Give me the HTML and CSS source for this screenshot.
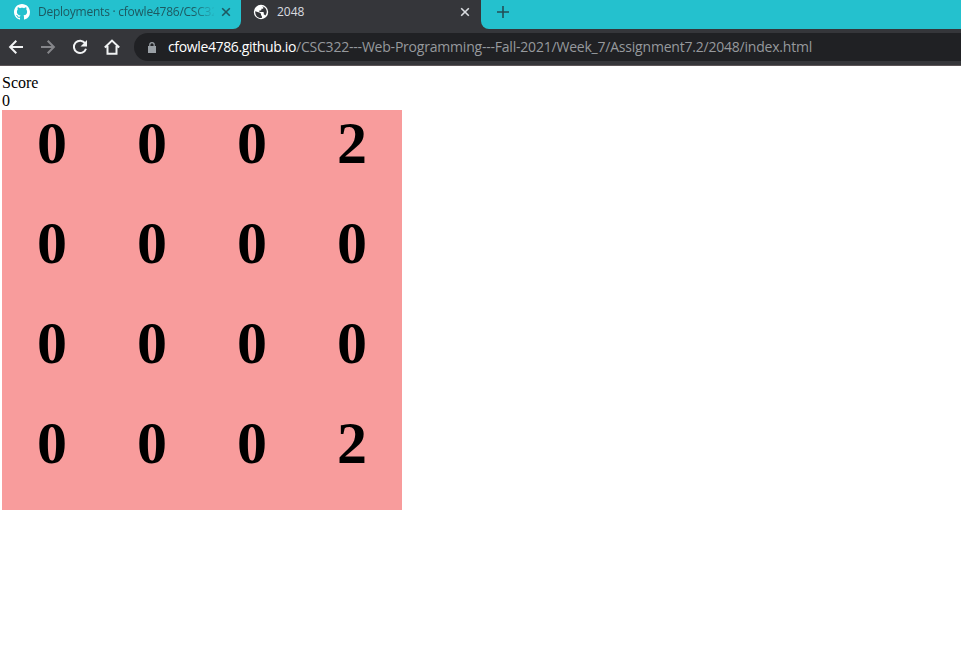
FILE: index.html
```html
<!DOCTYPE html>
<html lang="en">
<head>
<meta charset="utf-8">
<title>2048</title>
<link rel="stylesheet" href="styles.css">
</head>
<body>
<header class="browser">
  <div class="tabstrip">
    <div class="tab tab-inactive">
      <svg class="favicon" viewBox="0 0 16 16"><path fill="#fff" d="M8 0C3.58 0 0 3.58 0 8c0 3.54 2.29 6.53 5.47 7.59.4.07.55-.17.55-.38 0-.19-.01-.82-.01-1.49-2.01.37-2.53-.49-2.69-.94-.09-.23-.48-.94-.82-1.13-.28-.15-.68-.52-.01-.53.63-.01 1.08.58 1.23.82.72 1.21 1.87.87 2.33.66.07-.52.28-.87.51-1.07-1.78-.2-3.64-.89-3.64-3.95 0-.87.31-1.59.82-2.15-.08-.2-.36-1.02.08-2.12 0 0 .67-.21 2.2.82.64-.18 1.32-.27 2-.27s1.36.09 2 .27c1.53-1.04 2.2-.82 2.2-.82.44 1.1.16 1.92.08 2.12.51.56.82 1.27.82 2.15 0 3.07-1.87 3.75-3.65 3.95.29.25.54.73.54 1.48 0 1.07-.01 1.93-.01 2.2 0 .21.15.46.55.38A8.01 8.01 0 0 0 16 8c0-4.42-3.58-8-8-8z"/></svg>
      <span class="tab-title title-long">Deployments · cfowle4786/CSC32</span>
      <svg class="close" viewBox="0 0 10 10"><path d="M1.2 1.2l7.6 7.6M8.8 1.2L1.2 8.8"/></svg>
    </div>
    <div class="tab tab-active">
      <svg class="favicon" viewBox="0 0 16 16"><circle cx="8" cy="8" r="7.2" fill="#fff"/><path fill="#35363a" d="M2.2 7.2l4 1.2c1.2.4 1.8 1 1.8 1.8v1.2c.8 0 1 .5.9 1.2v1.3c-4 .5-6.9-2.3-6.7-6.7zM9 2.3c3 .5 4.8 3 4.8 5.8-.2 1.3-.7 2.6-1.5 3.5-.4-.7-.8-1-1.5-1V8.9c0-.7-.4-1-1-1H6.4V6.5h1.3c.5 0 .7-.3.7-.8V4.8h1c.8 0 1.1-.5 1-1.3z"/></svg>
      <span class="tab-title">2048</span>
      <svg class="close" viewBox="0 0 10 10"><path d="M1.2 1.2l7.6 7.6M8.8 1.2L1.2 8.8"/></svg>
    </div>
    <div class="strip-rest"><svg class="plus" viewBox="0 0 12 12"><path d="M6 0v12M0 6h12"/></svg></div>
  </div>
  <div class="toolbar">
    <svg class="nav" viewBox="0 0 16 16"><path d="M15 8H2.5M8.3 1.8L2.1 8l6.2 6.2"/></svg>
    <svg class="nav nav-off" viewBox="0 0 16 16"><path d="M1 8h12.5M7.7 1.8L13.9 8l-6.2 6.2"/></svg>
    <svg class="nav" viewBox="0 0 16 16"><path d="M13.2 4.3A6.2 6.2 0 1 0 14 9.8"/><path class="solid" d="M15 1v6.5H8.5z"/></svg>
    <svg class="nav" viewBox="0 0 16 16"><path d="M.8 8.4L8 1.6l7.2 6.8M3.5 7v7.7h9V7"/></svg>
    <div class="omnibox">
      <svg class="lock" viewBox="0 0 8 11"><path fill="#9aa0a6" d="M0 4h8v7H0z"/><path fill="none" stroke="#9aa0a6" stroke-width="1.2" d="M1.8 4.5V2.8a2.2 2.2 0 0 1 4.4 0v1.7"/></svg>
      <span class="host">cfowle4786.github.io</span><span class="path">/CSC322---Web-Programming---Fall-2021/Week_7/Assignment7.2/2048/index.html</span>
    </div>
  </div>
</header>
<main class="page">
  <div>Score</div>
  <div>0</div>
  <div class="board">
    <div>0</div><div>0</div><div>0</div><div>2</div>
    <div>0</div><div>0</div><div>0</div><div>0</div>
    <div>0</div><div>0</div><div>0</div><div>0</div>
    <div>0</div><div>0</div><div>0</div><div>2</div>
  </div>
</main>
</body>
</html>
```
FILE: styles.css
```css
* { box-sizing: border-box; }
body {
  margin: 0;
  height: 661px;
  overflow: hidden;
  background: #fff;
  color: #000;
  font: 16px/18px "Liberation Serif", serif;
}
svg { flex: none; }
.browser {
  height: 66px;
  background: #35363a;
  border-bottom: 1px solid #5b5456;
  font-family: "Open Sans", "Noto Sans", sans-serif;
}
.tabstrip { display: flex; height: 29px; }
.tab { display: flex; align-items: center; height: 29px; padding-bottom: 5px; }
.tab-inactive {
  width: 241px;
  padding-left: 14px;
  background: #24c1ce;
  border-bottom-right-radius: 8px;
  color: #1d5961;
}
.tab-active { width: 240px; padding-left: 12px; color: #dadce0; }
.favicon { width: 16px; height: 16px; }
.tab-title {
  flex: none;
  width: 176px;
  margin-left: 8px;
  white-space: nowrap;
  font-size: 12px;
  line-height: 18px;
}
.title-long {
  letter-spacing: -0.24px;
  -webkit-mask-image: linear-gradient(to right, #000 155px, transparent 178px);
  mask-image: linear-gradient(to right, #000 155px, transparent 178px);
}
.close { width: 10px; height: 10px; margin-left: 7px; fill: none; stroke: currentColor; stroke-width: 1.6; }
.strip-rest {
  flex: 1;
  padding: 6px 0 0 16px;
  background: #24c1ce;
  border-bottom-left-radius: 8px;
}
.plus { display: block; width: 12px; height: 12px; stroke: #234e55; stroke-width: 1.6; }
.toolbar { display: flex; align-items: center; height: 36px; padding-left: 8px; gap: 16px; }
.nav { width: 16px; height: 16px; fill: none; stroke: #f1f3f4; stroke-width: 2; }
.nav .solid { fill: #f1f3f4; stroke: none; }
.nav-off { stroke: #85868a; }
.omnibox {
  display: flex;
  align-items: center;
  flex: 1;
  height: 28px;
  margin-left: -2px;
  padding-left: 14px;
  background: #202124;
  border-radius: 14px 0 0 14px;
  font-size: 14px;
  line-height: 20px;
  white-space: nowrap;
}
.lock { width: 8px; height: 11px; margin-right: 12px; }
.host { color: #fff; width: 128px; letter-spacing: -0.36px; }
.path { color: #96999d; letter-spacing: -0.21px; }
.page { padding: 8px 2px; }
.board {
  display: grid;
  grid-template-columns: repeat(4, 100px);
  grid-template-rows: repeat(4, 100px);
  width: 400px;
  background: #f89c9c;
  font-size: 60px;
  font-weight: bold;
  line-height: 67px;
  text-align: center;
}
```
